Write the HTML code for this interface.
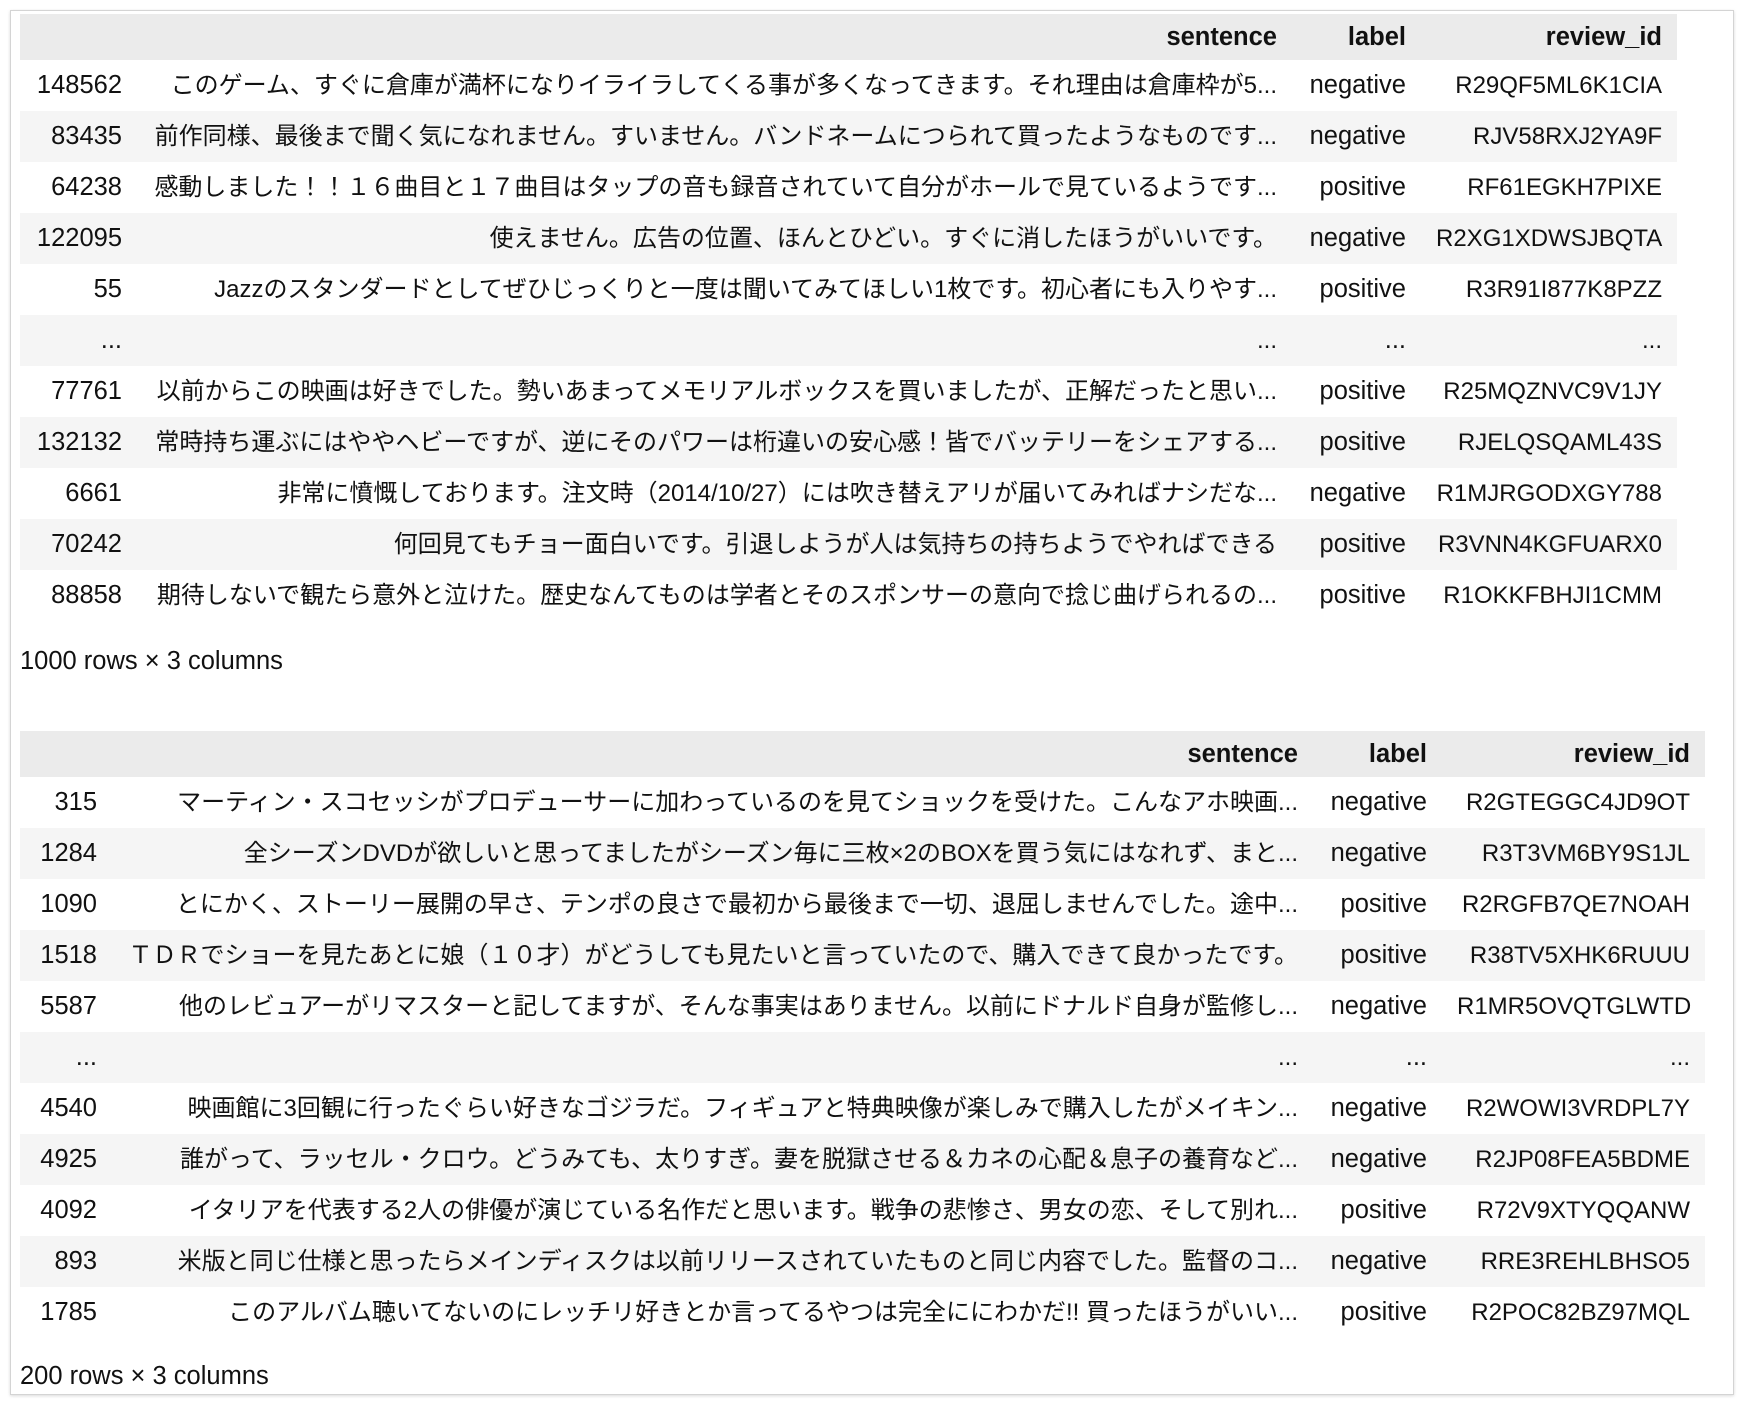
<!DOCTYPE html>
<html><head><meta charset="utf-8">
<style>
html,body{margin:0;padding:0;background:#fff;width:1744px;height:1404px;overflow:hidden}
body{font-family:"Liberation Sans","Noto Sans CJK JP",sans-serif;color:#111;font-size:25.5px}
.panel{position:absolute;left:10px;top:10px;width:1722px;height:1383px;border:1px solid #d4d4d4;box-shadow:0 1px 3px rgba(0,0,0,.15);background:#fff}
table{position:absolute;border-collapse:collapse;table-layout:fixed}
td,th{height:51px;padding:0 15px;text-align:right;white-space:nowrap;overflow:hidden;vertical-align:middle;line-height:51px}
td:nth-child(2){font-size:24px}
td:nth-child(4){font-size:24px;text-overflow:clip}
th{height:46px;line-height:46px;font-weight:bold;background:#ebebeb}
tbody tr:nth-child(even) td{background:#f5f5f5}
.cap{position:absolute;left:20px;font-size:25.5px;line-height:30px}
</style></head><body>
<div class="panel"></div>
<table style="left:20px;top:14px;width:1657px">
<colgroup><col style="width:117px"><col style="width:1155px"><col style="width:129px"><col style="width:256px"></colgroup>
<thead><tr><th></th><th>sentence</th><th>label</th><th>review_id</th></tr></thead>
<tbody>
<tr><td>148562</td><td>このゲーム、すぐに倉庫が満杯になりイライラしてくる事が多くなってきます。それ理由は倉庫枠が5...</td><td>negative</td><td>R29QF5ML6K1CIA</td></tr>
<tr><td>83435</td><td>前作同様、最後まで聞く気になれません。すいません。バンドネームにつられて買ったようなものです...</td><td>negative</td><td>RJV58RXJ2YA9F</td></tr>
<tr><td>64238</td><td>感動しました！！１６曲目と１７曲目はタップの音も録音されていて自分がホールで見ているようです...</td><td>positive</td><td>RF61EGKH7PIXE</td></tr>
<tr><td>122095</td><td>使えません。広告の位置、ほんとひどい。すぐに消したほうがいいです。</td><td>negative</td><td>R2XG1XDWSJBQTA</td></tr>
<tr><td>55</td><td>Jazzのスタンダードとしてぜひじっくりと一度は聞いてみてほしい1枚です。初心者にも入りやす...</td><td>positive</td><td>R3R91I877K8PZZ</td></tr>
<tr><td>...</td><td>...</td><td>...</td><td>...</td></tr>
<tr><td>77761</td><td>以前からこの映画は好きでした。勢いあまってメモリアルボックスを買いましたが、正解だったと思い...</td><td>positive</td><td>R25MQZNVC9V1JY</td></tr>
<tr><td>132132</td><td>常時持ち運ぶにはややヘビーですが、逆にそのパワーは桁違いの安心感！皆でバッテリーをシェアする...</td><td>positive</td><td>RJELQSQAML43S</td></tr>
<tr><td>6661</td><td>非常に憤慨しております。注文時（2014/10/27）には吹き替えアリが届いてみればナシだな...</td><td>negative</td><td>R1MJRGODXGY788</td></tr>
<tr><td>70242</td><td>何回見てもチョー面白いです。引退しようが人は気持ちの持ちようでやればできる</td><td>positive</td><td>R3VNN4KGFUARX0</td></tr>
<tr><td>88858</td><td>期待しないで観たら意外と泣けた。歴史なんてものは学者とそのスポンサーの意向で捻じ曲げられるの...</td><td>positive</td><td>R1OKKFBHJI1CMM</td></tr>
</tbody></table>
<div class="cap" style="top:646px">1000 rows × 3 columns</div>

<table style="left:20px;top:731px;width:1685px">
<colgroup><col style="width:92px"><col style="width:1201px"><col style="width:129px"><col style="width:263px"></colgroup>
<thead><tr><th></th><th>sentence</th><th>label</th><th>review_id</th></tr></thead>
<tbody>
<tr><td>315</td><td>マーティン・スコセッシがプロデューサーに加わっているのを見てショックを受けた。こんなアホ映画...</td><td>negative</td><td>R2GTEGGC4JD9OT</td></tr>
<tr><td>1284</td><td>全シーズンDVDが欲しいと思ってましたがシーズン毎に三枚×2のBOXを買う気にはなれず、まと...</td><td>negative</td><td>R3T3VM6BY9S1JL</td></tr>
<tr><td>1090</td><td>とにかく、ストーリー展開の早さ、テンポの良さで最初から最後まで一切、退屈しませんでした。途中...</td><td>positive</td><td>R2RGFB7QE7NOAH</td></tr>
<tr><td>1518</td><td>ＴＤＲでショーを見たあとに娘（１０才）がどうしても見たいと言っていたので、購入できて良かったです。</td><td>positive</td><td>R38TV5XHK6RUUU</td></tr>
<tr><td>5587</td><td>他のレビュアーがリマスターと記してますが、そんな事実はありません。以前にドナルド自身が監修し...</td><td>negative</td><td>R1MR5OVQTGLWTD</td></tr>
<tr><td>...</td><td>...</td><td>...</td><td>...</td></tr>
<tr><td>4540</td><td>映画館に3回観に行ったぐらい好きなゴジラだ。フィギュアと特典映像が楽しみで購入したがメイキン...</td><td>negative</td><td>R2WOWI3VRDPL7Y</td></tr>
<tr><td>4925</td><td>誰がって、ラッセル・クロウ。どうみても、太りすぎ。妻を脱獄させる＆カネの心配＆息子の養育など...</td><td>negative</td><td>R2JP08FEA5BDME</td></tr>
<tr><td>4092</td><td>イタリアを代表する2人の俳優が演じている名作だと思います。戦争の悲惨さ、男女の恋、そして別れ...</td><td>positive</td><td>R72V9XTYQQANW</td></tr>
<tr><td>893</td><td>米版と同じ仕様と思ったらメインディスクは以前リリースされていたものと同じ内容でした。監督のコ...</td><td>negative</td><td>RRE3REHLBHSO5</td></tr>
<tr><td>1785</td><td>このアルバム聴いてないのにレッチリ好きとか言ってるやつは完全ににわかだ!! 買ったほうがいい...</td><td>positive</td><td>R2POC82BZ97MQL</td></tr>
</tbody></table>
<div class="cap" style="top:1361px">200 rows × 3 columns</div>
</body></html>
